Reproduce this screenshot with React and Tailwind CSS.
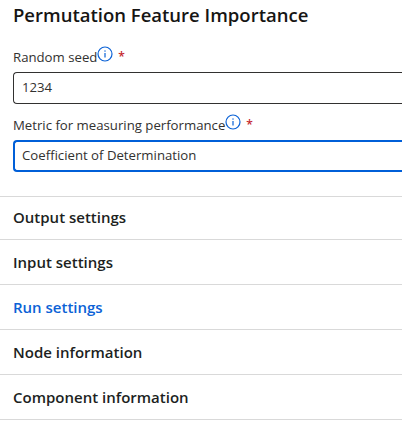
const sections = [
  { name: "Output settings", first: true },
  { name: "Input settings" },
  { name: "Run settings", active: true },
  { name: "Node information" },
  { name: "Component information" },
];

function InfoIcon() {
  return (
    <svg width="16" height="16" viewBox="0 0 16 16" fill="none" className="shrink-0">
      <circle cx="8" cy="8" r="7" stroke="#0b62d6" strokeWidth="1.2" />
      <rect x="7.4" y="7" width="1.2" height="4.5" fill="#0b62d6" />
      <rect x="7.4" y="4.4" width="1.2" height="1.3" fill="#0b62d6" />
    </svg>
  );
}

function Field({ label, value, focused }) {
  return (
    <div>
      <div className="flex items-start h-6 text-[13.2px] leading-5 text-[#323130]">
        <span className="mt-px">{label}</span>
        <InfoIcon />
        <span className="ml-[5px] mt-[3px] text-xs font-semibold text-[#c4262c]">*</span>
      </div>
      <div
        className={
          focused
            ? "mt-[2px] h-8 flex items-center pl-[7px] text-[13.2px] text-[#323130] rounded-l-sm border-2 border-r-0 border-[#005fd8]"
            : "mt-[2px] h-8 flex items-center pl-2 text-[13.2px] text-[#323130] rounded-l-sm border border-r-0 border-[#323130]"
        }
      >
        {value}
      </div>
    </div>
  );
}

export default function App() {
  return (
    <div className="w-[402px] h-[433px] bg-white overflow-hidden pl-[13px] font-['Open_Sans','Noto_Sans',sans-serif]">
      <h1 className="pt-[3px] text-[18.5px] font-semibold leading-6 text-[#161514]">Permutation Feature Importance</h1>
      <div className="mt-[19px] flex flex-col gap-[10px]">
        <Field label="Random seed" value="1234" />
        <Field label="Metric for measuring performance" value="Coefficient of Determination" focused />
      </div>
      <div className="mt-6 -ml-[13px]">
        {sections.map((s) => (
          <div
            key={s.name}
            className={[
              s.first ? "h-[43px] pb-[2px]" : "h-[45px]",
              "flex items-center pl-[13px] border-t border-[#d9d9d9] text-[15px] font-semibold",
              s.active ? "text-[#0b62d6]" : "text-[#201f1e]",
            ].join(" ")}
          >
            {s.name}
          </div>
        ))}
        <div className="border-t border-[#d9d9d9]" />
      </div>
    </div>
  );
}
